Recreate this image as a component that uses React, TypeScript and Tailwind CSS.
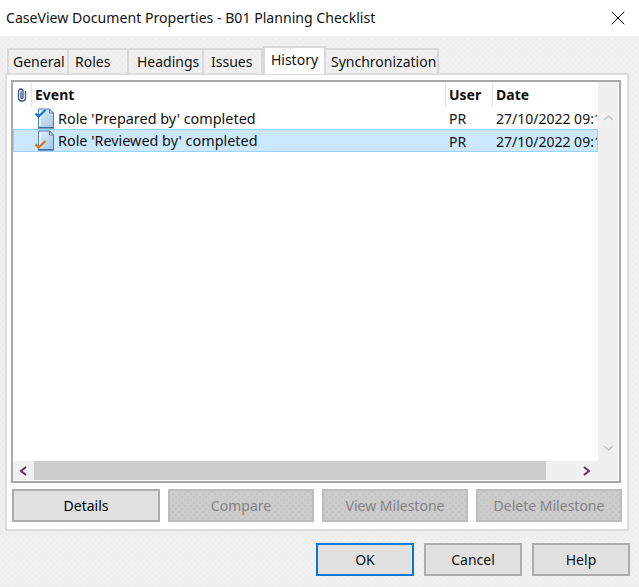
import { X } from "lucide-react";

const tabs = [
  { label: "General", w: "w-[62px]", pl: "pl-[4px]" },
  { label: "Roles", w: "w-[60px]", pl: "pl-[6px]" },
  { label: "Headings", w: "w-[75px]", pl: "pl-[8px]" },
  { label: "Issues", w: "w-[59px]", pl: "pl-[7px]" },
  { label: "History", w: "w-[63px]", pl: "", active: true },
  { label: "Synchronization", w: "w-[113px]", pl: "pl-[5px]" },
];

// sparse staggered dots, the dithered look of the old dialog surface
const dither =
  "bg-[radial-gradient(circle,#ececec_0.7px,transparent_1px),radial-gradient(circle,#ececec_0.7px,transparent_1px)] bg-[length:6px_6px] bg-[position:0_0,3px_3px]";
const ditherDisabled =
  "bg-[radial-gradient(circle,#c4c4c4_0.7px,transparent_1px),radial-gradient(circle,#c4c4c4_0.7px,transparent_1px)] bg-[length:6px_6px] bg-[position:0_0,3px_3px]";

function DocIcon({ id, check, low }: { id: string; check: string; low?: boolean }) {
  return (
    <svg width="22" height="22" viewBox="0 0 22 22" className="shrink-0">
      <defs>
        <linearGradient id={id} x1="0" y1="0" x2="1" y2="1">
          <stop offset="0" stopColor="#e4f0fa" />
          <stop offset="1" stopColor="#a0c6e8" />
        </linearGradient>
      </defs>
      <path d="M3.500 1H14.500L18.500 5V19.500H3.500Z" fill={`url(#${id})`} stroke="#4d7eae" />
      <path d="M14.500 1V5H18.500Z" fill="#f1f7fc" stroke="#4d7eae" />
      <path d="M3 20H19" stroke="#2f5f8f" strokeWidth="1.200" />
      <path d="M5 4V18" stroke="#ffffff" />
      {low ? (
        <path d="M0.500 14L3.500 17.500L10.500 11" fill="none" stroke={check} strokeWidth="2.300" />
      ) : (
        <path d="M0.500 5.500L3.500 8.500L10.500 2" fill="none" stroke={check} strokeWidth="2.300" />
      )}
    </svg>
  );
}

function Clip() {
  return (
    <svg width="10" height="14" viewBox="0 0 10 14">
      <path
        d="M4 3.500V9.500a1 1 0 0 0 2 0V2.800a1.800 1.800 0 0 0-1.800-1.800h-.4A2.300 2.300 0 0 0 1.500 3.300V10a3 3 0 0 0 3 3h1a3 3 0 0 0 3-3V3"
        fill="none"
        stroke="#34567f"
        strokeWidth="1.300"
      />
    </svg>
  );
}

function Row({ selected, id, check, text, low, h }: { selected?: boolean; id: string; check: string; text: string; low?: boolean; h: string }) {
  return (
    <div
      className={`flex ${h} items-center border pt-[1px] ${
        selected ? "border-[#99d1ff] bg-[#cce8ff]" : "border-transparent"
      }`}
    >
      <div className="w-[21px] shrink-0" />
      <div className="flex w-[411px] shrink-0 items-center gap-px">
        <DocIcon id={id} check={check} low={low} />
        <span className="whitespace-nowrap text-[14.4px]">{text}</span>
      </div>
      <div className="w-[47px] shrink-0 pl-[3px]">PR</div>
      <div className="min-w-0 flex-1 overflow-hidden whitespace-nowrap pl-[3px]">27/10/2022 09:17</div>
    </div>
  );
}

function ActionButton({ label, disabled, w }: { label: string; disabled?: boolean; w: string }) {
  return (
    <button
      className={`h-[33px] ${w} border-2 ${
        disabled
          ? `border-[#bcbcbc] bg-[#cccccc] text-[#838383] ${ditherDisabled}`
          : "border-[#adadad] bg-[#e1e1e1] text-black"
      }`}
    >
      {label}
    </button>
  );
}

export default function App() {
  return (
    <div className={`flex h-[587px] w-[639px] flex-col overflow-hidden bg-[#f0f0f0] font-['Noto_Sans',sans-serif] text-[14px] text-[#111111] ${dither}`}>
      <div className="flex h-[36px] shrink-0 items-center justify-between bg-white pl-[6px] pr-[9px]">
        <span className="text-[14.1px]">CaseView Document Properties - B01 Planning Checklist</span>
        <X size={24} strokeWidth={1} className="text-black" />
      </div>

      <div className="flex h-[37px] shrink-0 items-end pl-[7px]">
        {tabs.map((t) =>
          t.active ? (
            <div
              key={t.label}
              className={`${t.w} relative z-10 -mb-px flex h-[28px] items-start justify-center border-2 border-b-0 border-[#d9d9d9] bg-white pt-[1px]`}
            >
              {t.label}
            </div>
          ) : (
            <div
              key={t.label}
              className={`${t.w} ${t.pl} flex h-[25px] items-center border-2 border-b-0 border-l-0 first:border-l-2 border-[#d9d9d9]`}
            >
              {t.label}
            </div>
          ),
        )}
      </div>

      <div className="ml-[5px] flex h-[458px] w-[624px] shrink-0 flex-col border-2 border-[#dddddd] bg-white px-[4px] pt-[5px]">
        <div className="flex h-[403px] w-[610px] shrink-0 border-2 border-[#a8a8a8] bg-white pb-[1px] pr-[1px]">
          <div className="flex min-w-0 flex-1 flex-col">
            <div className="flex h-[25px] shrink-0 items-center font-bold">
              <div className="flex h-full w-[19px] shrink-0 items-center justify-center border-r border-[#e5e5e5]">
                <Clip />
              </div>
              <div className="flex h-full w-[414px] shrink-0 items-center border-r border-[#e5e5e5] pl-[3px]">
                Event
              </div>
              <div className="flex h-full w-[47px] shrink-0 items-center border-r border-[#e5e5e5] pl-[3px]">
                User
              </div>
              <div className="pl-[3px]">Date</div>
            </div>
            <Row id="doc-a" h="h-[22px]" check="#1577c9" text="Role 'Prepared by' completed" />
            <Row id="doc-b" h="h-[23px]" selected low check="#d9791f" text="Role 'Reviewed by' completed" />
            <div className="flex-1" />
            <div className="flex h-[19px] shrink-0 bg-[#f0f0f0]">
              <div className="flex w-[21px] items-center justify-center text-[#5b3a57]">
                <svg width="9" height="10" viewBox="0 0 9 10">
                  <path d="M7 1L2 5L7 9" fill="none" stroke="currentColor" strokeWidth="2" />
                </svg>
              </div>
              <div className="w-[512px] bg-[#cccccc]" />
              <div className="flex flex-1 items-center justify-end pr-[7px] text-[#5b3a57]">
                <svg width="9" height="10" viewBox="0 0 9 10">
                  <path d="M2 1L7 5L2 9" fill="none" stroke="currentColor" strokeWidth="2" />
                </svg>
              </div>
            </div>
          </div>
          <div className="flex w-[20px] shrink-0 flex-col items-center justify-between bg-[#f0f0f0] pb-[28px] pt-[32px] text-[#c4c4c4]">
            <svg width="11" height="7" viewBox="0 0 11 7">
              <path d="M1 6L5.500 2L10 6" fill="none" stroke="currentColor" strokeWidth="1.600" />
            </svg>
            <svg width="11" height="7" viewBox="0 0 11 7">
              <path d="M1 1L5.500 5L10 1" fill="none" stroke="currentColor" strokeWidth="1.600" />
            </svg>
          </div>
        </div>
        <div className="mt-[6px] flex gap-[8px] pl-[1px]">
          <ActionButton label="Details" w="w-[148px]" />
          <ActionButton label="Compare" disabled w="w-[146px]" />
          <ActionButton label="View Milestone" disabled w="w-[146px]" />
          <ActionButton label="Delete Milestone" disabled w="w-[146px]" />
        </div>
      </div>

      <div className="mt-[12px] flex justify-end gap-[10px] pr-[9px]">
        <button className="h-[33px] w-[98px] border-2 border-[#0078d7] bg-[#e1e1e1]">OK</button>
        <button className="h-[33px] w-[98px] border-2 border-[#adadad] bg-[#e1e1e1]">Cancel</button>
        <button className="h-[33px] w-[98px] border-2 border-[#adadad] bg-[#e1e1e1]">Help</button>
      </div>
    </div>
  );
}
